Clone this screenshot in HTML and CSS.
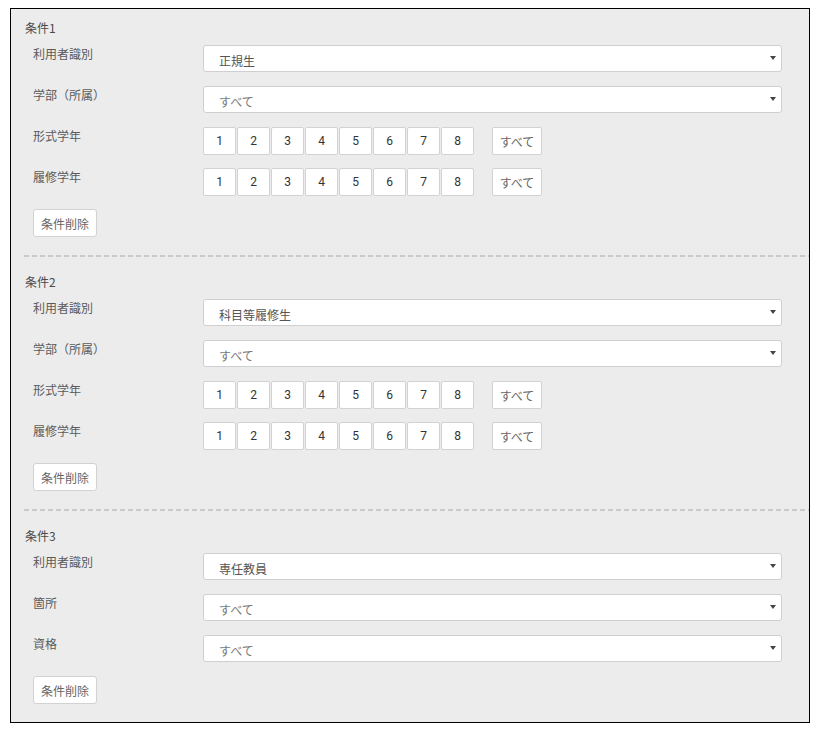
FILE: index.html
```html
<html>
<head>
<meta charset="utf-8">
<link rel="stylesheet" href="styles.css">
</head>
<body>
<div class="panel">

<div class="cond">
<div class="cond-title">条件1</div>
<div class="row">
<div class="label">利用者識別</div>
<div class="select"><span class="value dark">正規生</span><span class="caret"></span></div>
</div>
<div class="row">
<div class="label">学部（所属）</div>
<div class="select"><span class="value">すべて</span><span class="caret"></span></div>
</div>
<div class="row">
<div class="label">形式学年</div>
<div class="grades">
<span class="num">1</span><span class="num">2</span><span class="num">3</span><span class="num">4</span><span class="num">5</span><span class="num">6</span><span class="num">7</span><span class="num">8</span>
</div>
<span class="all">すべて</span>
</div>
<div class="row">
<div class="label">履修学年</div>
<div class="grades">
<span class="num">1</span><span class="num">2</span><span class="num">3</span><span class="num">4</span><span class="num">5</span><span class="num">6</span><span class="num">7</span><span class="num">8</span>
</div>
<span class="all">すべて</span>
</div>
<div class="actions"><span class="btn">条件削除</span></div>
</div>

<div class="cond">
<div class="cond-title">条件2</div>
<div class="row">
<div class="label">利用者識別</div>
<div class="select"><span class="value dark">科目等履修生</span><span class="caret"></span></div>
</div>
<div class="row">
<div class="label">学部（所属）</div>
<div class="select"><span class="value">すべて</span><span class="caret"></span></div>
</div>
<div class="row">
<div class="label">形式学年</div>
<div class="grades">
<span class="num">1</span><span class="num">2</span><span class="num">3</span><span class="num">4</span><span class="num">5</span><span class="num">6</span><span class="num">7</span><span class="num">8</span>
</div>
<span class="all">すべて</span>
</div>
<div class="row">
<div class="label">履修学年</div>
<div class="grades">
<span class="num">1</span><span class="num">2</span><span class="num">3</span><span class="num">4</span><span class="num">5</span><span class="num">6</span><span class="num">7</span><span class="num">8</span>
</div>
<span class="all">すべて</span>
</div>
<div class="actions"><span class="btn">条件削除</span></div>
</div>

<div class="cond last">
<div class="cond-title">条件3</div>
<div class="row">
<div class="label">利用者識別</div>
<div class="select"><span class="value dark">専任教員</span><span class="caret"></span></div>
</div>
<div class="row">
<div class="label">箇所</div>
<div class="select"><span class="value">すべて</span><span class="caret"></span></div>
</div>
<div class="row">
<div class="label">資格</div>
<div class="select"><span class="value">すべて</span><span class="caret"></span></div>
</div>
<div class="actions"><span class="btn">条件削除</span></div>
</div>

</div>
</body>
</html>
```

FILE: styles.css
```css
body{
	margin: 8px 0 0 10px;
	background: #fff;
	font-family: "Noto Sans CJK JP", "Noto Sans", sans-serif;
	font-size: 12px;
	color: #555;
}
.panel{
	width: 800px;
	box-sizing: border-box;
	border: 1px solid #000;
	background: #ececec;
	padding: 11px 0 18px 13px;
}
.cond{
	padding-bottom: 20px;
	margin-bottom: 17px;
	background: repeating-linear-gradient(to right, #cacaca 0 5px, transparent 5px 8px) left bottom / 100% 2px no-repeat;
}
.cond.last{
	padding-bottom: 0;
	margin-bottom: 0;
	background: none;
}
.cond-title{
	line-height: 16px;
	margin: 0 0 9px 1px;
	color: #4a4a4a;
}
.row{
	display: flex;
	align-items: flex-start;
	height: 28px;
	margin: 0 27px 13px 9px;
}
.label{
	width: 170px;
	flex: none;
	line-height: 17px;
	color: #5a5a5a;
}
.select{
	flex: 1;
	height: 27px;
	box-sizing: border-box;
	display: flex;
	align-items: center;
	justify-content: space-between;
	background: #fff;
	border: 1px solid #cfcfcf;
	border-radius: 3px;
	padding: 0 5px 0 15px;
}
.value{
	padding-top: 4px;
	color: #777;
}
.value.dark{
	color: #555;
}
.caret{
	width: 0;
	height: 0;
	border-left: 3px solid transparent;
	border-right: 3px solid transparent;
	border-top: 4px solid #444;
	margin-top: -1px;
}
.grades{
	display: flex;
	gap: 1px;
}
.num, .all, .btn{
	display: flex;
	align-items: center;
	justify-content: center;
	height: 28px;
	box-sizing: border-box;
	background: #fff;
	border: 1px solid #d2d2d2;
	border-radius: 2px;
}
.num{
	width: 33px;
	color: #333;
	font-family: Roboto, "Noto Sans", sans-serif;
}
.all{
	width: 50px;
	margin-left: 18px;
	color: #666;
}
.actions{
	display: flex;
	margin-left: 9px;
}
.btn{
	padding: 0 7px;
	border-radius: 3px;
	color: #666;
}
```
